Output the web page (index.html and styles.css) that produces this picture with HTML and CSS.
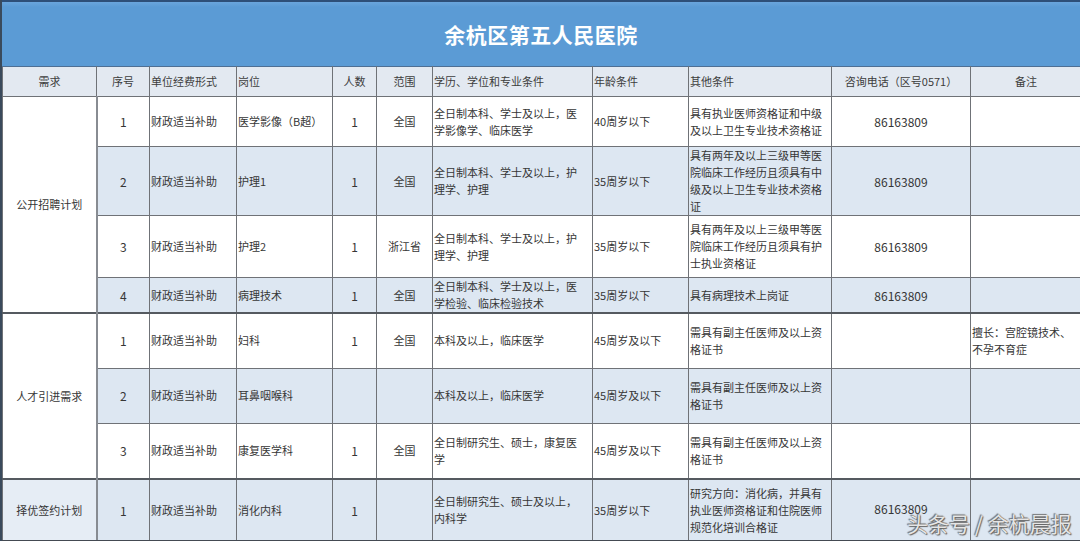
FILE: index.html
```html
<!DOCTYPE html>
<html lang="zh-CN">
<head>
<meta charset="utf-8">
<title>余杭区第五人民医院</title>
<link rel="stylesheet" href="styles.css">
</head>
<body>
<div class="sheet">
  <div class="title">余杭区第五人民医院</div>
  <table class="grid">
    <colgroup>
      <col class="c1"><col class="c2"><col class="c3"><col class="c4"><col class="c5"><col class="c6">
      <col class="c7"><col class="c8"><col class="c9"><col class="c10"><col class="c11">
    </colgroup>
    <thead>
      <tr class="head">
        <th class="ctr">需求</th>
        <th class="ctr">序号</th>
        <th>单位经费形式</th>
        <th>岗位</th>
        <th class="ctr">人数</th>
        <th class="ctr">范围</th>
        <th>学历、学位和专业条件</th>
        <th>年龄条件</th>
        <th>其他条件</th>
        <th class="ctr">咨询电话（区号0571）</th>
        <th class="ctr">备注</th>
      </tr>
    </thead>
    <tbody>
      <tr class="r1">
        <td class="ctr grp" rowspan="4">公开招聘计划</td>
        <td class="ctr num">1</td>
        <td>财政适当补助</td>
        <td>医学影像（B超）</td>
        <td class="ctr num">1</td>
        <td class="ctr">全国</td>
        <td>全日制本科、学士及以上，医<br>学影像学、临床医学</td>
        <td>40周岁以下</td>
        <td>具有执业医师资格证和中级<br>及以上卫生专业技术资格证</td>
        <td class="ctr num">86163809</td>
        <td></td>
      </tr>
      <tr class="r2 alt">
        <td class="ctr num">2</td>
        <td>财政适当补助</td>
        <td>护理1</td>
        <td class="ctr num">1</td>
        <td class="ctr">全国</td>
        <td>全日制本科、学士及以上，护<br>理学、护理</td>
        <td>35周岁以下</td>
        <td>具有两年及以上三级甲等医<br>院临床工作经历且须具有中<br>级及以上卫生专业技术资格<br>证</td>
        <td class="ctr num">86163809</td>
        <td></td>
      </tr>
      <tr class="r3">
        <td class="ctr num">3</td>
        <td>财政适当补助</td>
        <td>护理2</td>
        <td class="ctr num">1</td>
        <td class="ctr">浙江省</td>
        <td>全日制本科、学士及以上，护<br>理学、护理</td>
        <td>35周岁以下</td>
        <td>具有两年及以上三级甲等医<br>院临床工作经历且须具有护<br>士执业资格证</td>
        <td class="ctr num">86163809</td>
        <td></td>
      </tr>
      <tr class="r4 alt">
        <td class="ctr num">4</td>
        <td>财政适当补助</td>
        <td>病理技术</td>
        <td class="ctr num">1</td>
        <td class="ctr">全国</td>
        <td>全日制本科、学士及以上，医<br>学检验、临床检验技术</td>
        <td>35周岁以下</td>
        <td>具有病理技术上岗证</td>
        <td class="ctr num">86163809</td>
        <td></td>
      </tr>
      <tr class="r5 sep">
        <td class="ctr grp" rowspan="3">人才引进需求</td>
        <td class="ctr num">1</td>
        <td>财政适当补助</td>
        <td>妇科</td>
        <td class="ctr num">1</td>
        <td class="ctr">全国</td>
        <td>本科及以上，临床医学</td>
        <td>45周岁及以下</td>
        <td>需具有副主任医师及以上资<br>格证书</td>
        <td class="ctr"></td>
        <td>擅长：宫腔镜技术、<br>不孕不育症</td>
      </tr>
      <tr class="r6 alt">
        <td class="ctr num">2</td>
        <td>财政适当补助</td>
        <td>耳鼻咽喉科</td>
        <td class="ctr"></td>
        <td class="ctr"></td>
        <td>本科及以上，临床医学</td>
        <td>45周岁及以下</td>
        <td>需具有副主任医师及以上资<br>格证书</td>
        <td class="ctr"></td>
        <td></td>
      </tr>
      <tr class="r7">
        <td class="ctr num">3</td>
        <td>财政适当补助</td>
        <td>康复医学科</td>
        <td class="ctr num">1</td>
        <td class="ctr">全国</td>
        <td>全日制研究生、硕士，康复医<br>学</td>
        <td>45周岁及以下</td>
        <td>需具有副主任医师及以上资<br>格证书</td>
        <td class="ctr"></td>
        <td></td>
      </tr>
      <tr class="r8 alt sep">
        <td class="ctr grp alt">择优签约计划</td>
        <td class="ctr num">1</td>
        <td>财政适当补助</td>
        <td>消化内科</td>
        <td class="ctr num">1</td>
        <td class="ctr"></td>
        <td>全日制研究生、硕士及以上，<br>内科学</td>
        <td>35周岁以下</td>
        <td>研究方向：消化病，并具有<br>执业医师资格证和住院医师<br>规范化培训合格证</td>
        <td class="ctr num phone-last">86163809</td>
        <td></td>
      </tr>
    </tbody>
  </table>
  <div class="watermark">头条号 / 余杭晨报</div>
</div>
</body>
</html>
```

FILE: styles.css
```css
html, body {
  margin: 0;
  padding: 0;
  background: #ffffff;
}

.sheet {
  position: relative;
  width: 1080px;
  height: 541px;
  overflow: hidden;
  font-family: "Noto Sans CJK SC", "Noto Sans", sans-serif;
  color: #363636;
  border-left: 2px solid #3a4a5c;
  box-sizing: border-box;
}

.title {
  height: 66px;
  box-sizing: border-box;
  border-top: 2px solid #2e4f78;
  background: linear-gradient(#6aa5dc 0, #5b9bd5 5px, #5b9bd5 100%);
  color: #ffffff;
  font-size: 21px;
  font-weight: bold;
  display: flex;
  align-items: center;
  justify-content: center;
  letter-spacing: 0.5px;
}

.grid {
  width: 1079px;
  border-collapse: collapse;
  table-layout: fixed;
  font-size: 11px;
  line-height: 17px;
}

.c1 { width: 94px; }
.c2 { width: 53px; }
.c3 { width: 87px; }
.c4 { width: 96px; }
.c5 { width: 44px; }
.c6 { width: 56px; }
.c7 { width: 160px; }
.c8 { width: 96px; }
.c9 { width: 143px; }
.c10 { width: 139px; }
.c11 { width: 111px; }

.grid th,
.grid td {
  border: 1px solid #6f7277;
  padding: 0 0 0 1px;
  text-align: left;
  vertical-align: middle;
  white-space: nowrap;
  overflow: hidden;
  font-weight: normal;
}

.grid th {
  background: #e3e9f1;
  color: #3d3d3d;
  border-top: 1px solid #4e6f94;
}

.grid .ctr {
  text-align: center;
  padding: 0;
}

.grid .num {
  font-size: 12px;
}

.grid .phone-last {
  vertical-align: middle;
  padding-bottom: 4px;
}

.head { height: 30px; }
.r1 { height: 50px; }
.r2 { height: 68px; }
.r3 { height: 62px; }
.r4 { height: 35px; }
.r5 { height: 55px; }
.r6 { height: 55px; }
.r7 { height: 56px; }
.r8 { height: 62px; }

.alt td {
  background: #dde7f2;
}

.grid td.grp {
  background: #ffffff;
  border-right: 2px solid #888c92;
}

.grid td.grp.alt {
  background: #e6edf5;
}

.sep td {
  border-top: 2px solid #555a60;
}

.grid tbody tr:last-child td {
  border-bottom: 2px solid #444a52;
}

.watermark {
  position: absolute;
  left: 905px;
  top: 509px;
  font-size: 21px;
  line-height: 28px;
  color: rgba(255, 255, 255, 0.85);
  text-shadow: 0 0 1px #555, 1px 1px 1px #666, -1px -1px 1px #777;
  letter-spacing: 0;
}
```
